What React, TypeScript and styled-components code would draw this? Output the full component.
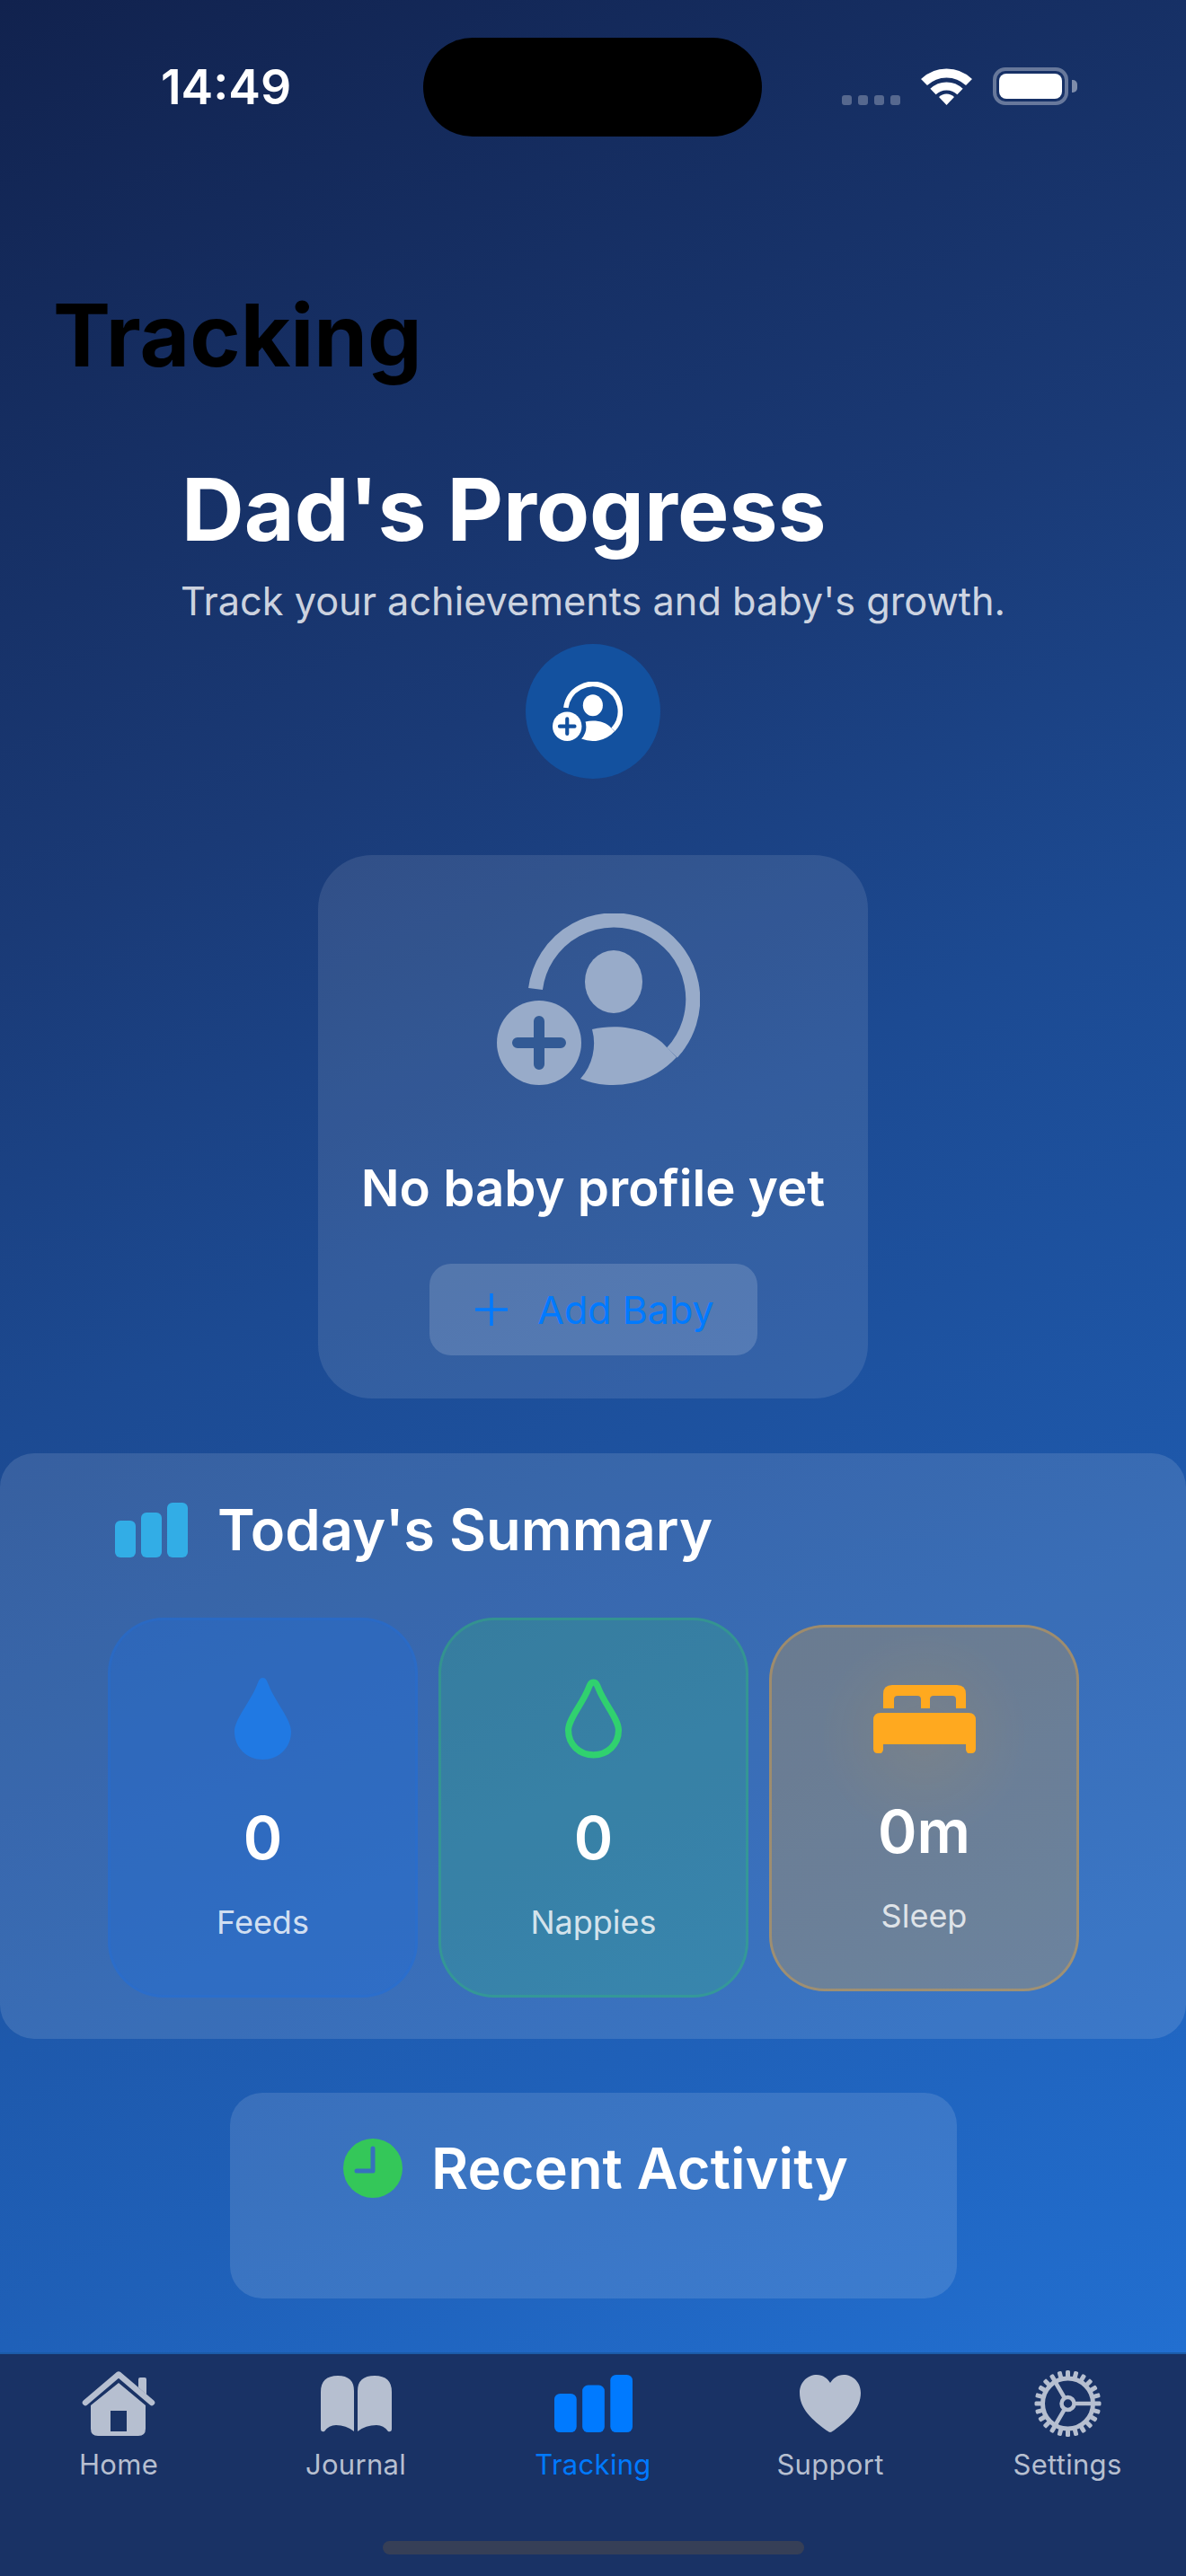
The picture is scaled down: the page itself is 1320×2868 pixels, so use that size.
import * as React from 'react';
import styled, { createGlobalStyle } from 'styled-components';

const GlobalStyle = createGlobalStyle`
  html, body {
    margin: 0;
    padding: 0;
    background: #132650;
  }
  * { box-sizing: border-box; }
`;

const PersonAddIcon = ({ width, color, cut }: { width: number; color: string; cut: string }) => (
  <svg width={width} viewBox="0 0 226 192" fill="none">
    <path d="M43 84A88 88 0 1 1 195 155" stroke={color} strokeWidth="16" />
    <ellipse cx="130" cy="76" rx="32" ry="35" fill={color} />
    <path d="M106 129C135 122 172 128 189 149L200 160A96 96 0 0 1 93 184A59 59 0 0 0 106 129Z" fill={color} />
    <circle cx="47" cy="144" r="47" fill={color} />
    <path d="M47 120V168M23 144H71" stroke={cut} strokeWidth="12" strokeLinecap="round" />
  </svg>
);

const BarsIcon = ({ width, height, color }: { width: number; height: number; color: string }) => (
  <svg width={width} height={height} viewBox="0 0 81 61" preserveAspectRatio="none" fill={color}>
    <rect x="0" y="20" width="23" height="41" rx="6" />
    <rect x="29" y="11" width="23" height="50" rx="6" />
    <rect x="58" y="0" width="23" height="61" rx="6" />
  </svg>
);

const DROP = 'M31.5 0C35 0 36 3 38 8C46 28 63 46 63 60C63 78 49 91 31.5 91C14 91 0 78 0 60C0 46 17 28 25 8C27 3 28 0 31.5 0Z';

const FilledDrop = () => (
  <svg width="63" height="91" viewBox="0 0 63 91">
    <path d={DROP} fill="#2079e3" />
  </svg>
);

const OutlineDrop = () => (
  <svg width="63" height="91" viewBox="-4 -4 71 99">
    <path d={DROP} fill="none" stroke="#30d16f" strokeWidth="8" />
  </svg>
);

const BedIcon = () => (
  <svg width="114" height="76" viewBox="0 0 114 76" fill="#ffa91f">
    <path
      fillRule="evenodd"
      d="M11 26V10Q11 0 21 0H93Q103 0 103 10V26ZM23 26H53V16Q53 12 49 12H27Q23 12 23 16ZM63 26H92V16Q92 12 88 12H67Q63 12 63 16Z"
    />
    <path d="M8 31H106Q114 31 114 39V71Q114 76 109 76H106Q104 76 103 72V66H11V72Q10 76 8 76H5Q0 76 0 71V39Q0 31 8 31Z" />
  </svg>
);

const ClockIcon = () => (
  <svg width="66" height="66" viewBox="0 0 66 66">
    <circle cx="33" cy="33" r="33" fill="#34c759" />
    <path d="M33 11V36H15" fill="none" stroke="#3671bd" strokeWidth="5" strokeLinecap="round" strokeLinejoin="round" />
  </svg>
);

const PlusIcon = () => (
  <svg width="36" height="36" viewBox="0 0 36 36">
    <path d="M18 0V36M0 18H36" stroke="#007aff" strokeWidth="3.5" />
  </svg>
);

const WifiIcon = () => (
  <svg width="57" height="42" viewBox="0 0 57 42" fill="none" stroke="#fff">
    <path d="M3.5 16.5A36 36 0 0 1 53.5 16.5" strokeWidth="10" />
    <path d="M13.5 27A21.5 21.5 0 0 1 43.5 27" strokeWidth="9" />
    <path d="M28.5 42L20 33A12 12 0 0 1 37 33Z" fill="#fff" stroke="none" />
  </svg>
);

const HomeIcon = () => (
  <svg width="82" height="72" viewBox="0 0 82 72" fill="#b6bfd0">
    <path d="M4 35L41 3.5L78 35" fill="none" stroke="#b6bfd0" strokeWidth="6.5" strokeLinecap="round" strokeLinejoin="round" />
    <path d="M63 9Q63 7 65 7H70Q72 7 72 9V26L63 18Z" />
    <path fillRule="evenodd" d="M41 13L71 38V64Q71 72 63 72H18Q10 72 10 64V38ZM32 44H50V67H32Z" />
  </svg>
);

const BookIcon = () => (
  <svg width="79" height="63" viewBox="0 0 79 63" fill="#b6bfd0">
    <path d="M0 18Q0 0 19 0Q37 0 37 17V62Q28 55 17 55Q9 55 4 62Q0 63 0 59Z" />
    <path d="M79 18Q79 0 60 0Q41 0 41 17V62Q50 55 62 55Q70 55 75 62Q79 63 79 59Z" />
  </svg>
);

const HeartIcon = () => (
  <svg width="68" height="64" viewBox="0 0 68 64" fill="#b6bfd0">
    <path d="M34 64C33 64 32 63 30 62C14 50 0 38 0 20C0 8 9 0 19 0C26 0 31 4 34 9C37 4 42 0 49 0C59 0 68 8 68 20C68 38 54 50 38 62C36 63 35 64 34 64Z" />
  </svg>
);

const GearIcon = () => (
  <svg width="75" height="74" viewBox="0 0 75 74" fill="none" stroke="#b6bfd0">
    <g transform="translate(37.5 37)">
      <circle r="28" strokeWidth="5" />
      <circle r="7" strokeWidth="4.5" />
      <path d="M7 0H28M-3.5 -6L-14 -24M-3.5 6L-14 24" strokeWidth="4.5" />
      {Array.from({ length: 24 }).map((_, i) => (
        <rect key={i} x="-2.5" y="-37" width="5" height="8" rx="1.5" fill="#b6bfd0" stroke="none" transform={`rotate(${i * 15})`} />
      ))}
    </g>
  </svg>
);

const tabs = [
  { label: 'Home', icon: <HomeIcon /> },
  { label: 'Journal', icon: <BookIcon /> },
  { label: 'Tracking', icon: <BarsIcon width={87} height={64} color="#007aff" />, active: true },
  { label: 'Support', icon: <HeartIcon /> },
  { label: 'Settings', icon: <GearIcon /> },
];

export default function App() {
  return (
    <Screen>
      <GlobalStyle />
      <Content>
        <StatusBar>
          <Time>14:49</Time>
          <Island />
          <StatusIcons>
            <SignalDots>
              <Dot />
              <Dot />
              <Dot />
              <Dot />
            </SignalDots>
            <WifiIcon />
            <Battery>
              <BatteryLevel />
            </Battery>
          </StatusIcons>
        </StatusBar>

        <PageTitle>Tracking</PageTitle>

        <Hero>
          <HeroTitle>Dad's Progress</HeroTitle>
          <HeroSub>Track your achievements and baby's growth.</HeroSub>
          <HeroBadge>
            <PersonAddIcon width={78} color="#fff" cut="#13519f" />
          </HeroBadge>
        </Hero>

        <EmptyCard>
          <PersonAddIcon width={226} color="#98abc9" cut="#325a95" />
          <EmptyText>No baby profile yet</EmptyText>
          <AddButton>
            <PlusIcon />
            Add Baby
          </AddButton>
        </EmptyCard>

        <SummaryPanel>
          <SummaryHeader>
            <BarsIcon width={81} height={61} color="#32ade6" />
            <SectionTitle>Today's Summary</SectionTitle>
          </SummaryHeader>
          <StatGrid>
            <StatCard $bg="rgba(28, 110, 225, 0.3)" $border="rgba(32, 110, 220, 0.3)">
              <StatIcon $h={91}>
                <FilledDrop />
              </StatIcon>
              <StatValue>0</StatValue>
              <StatLabel>Feeds</StatLabel>
            </StatCard>
            <StatCard $bg="rgba(48, 200, 110, 0.22)" $border="rgba(48, 200, 110, 0.3)">
              <StatIcon $h={91}>
                <OutlineDrop />
              </StatIcon>
              <StatValue>0</StatValue>
              <StatLabel>Nappies</StatLabel>
            </StatCard>
            <SleepCard>
              <StatIcon $h={76}>
                <BedIcon />
              </StatIcon>
              <StatValue>0m</StatValue>
              <StatLabel>Sleep</StatLabel>
            </SleepCard>
          </StatGrid>
        </SummaryPanel>

        <RecentPanel>
          <RecentHeader>
            <ClockIcon />
            <SectionTitle>Recent Activity</SectionTitle>
          </RecentHeader>
        </RecentPanel>
      </Content>

      <TabBar>
        <TabRow>
          {tabs.map(tab => (
            <Tab key={tab.label}>
              <TabIcon>{tab.icon}</TabIcon>
              <TabLabel $active={tab.active}>{tab.label}</TabLabel>
            </Tab>
          ))}
        </TabRow>
        <HomeBar />
      </TabBar>
    </Screen>
  );
}

const Screen = styled.div`
  width: 1320px;
  height: 2868px;
  display: flex;
  flex-direction: column;
  overflow: hidden;
  font-family: Inter, 'Liberation Sans', sans-serif;
  color: #fff;
  background: linear-gradient(155deg, #11224e 0%, #1a3a76 30%, #1c4a92 46%, #1f60b8 75%, #2375da 100%);
`;

const Content = styled.div`
  flex: 1;
  display: flex;
  flex-direction: column;
`;

const StatusBar = styled.div`
  display: grid;
  grid-template-columns: 471px 377px 1fr;
  padding-top: 42px;
  height: 152px;
`;

const Time = styled.div`
  padding-left: 179px;
  font-size: 53.5px;
  font-weight: 600;
  line-height: 110px;
`;

const Island = styled.div`
  height: 110px;
  background: #000;
  border-radius: 55px;
`;

const StatusIcons = styled.div`
  display: flex;
  align-items: flex-end;
  height: 75px;
  padding-left: 89px;
`;

const SignalDots = styled.div`
  display: flex;
  gap: 7px;
  margin-right: 23px;
  height: 11px;
`;

const Dot = styled.span`
  width: 11px;
  height: 11px;
  border-radius: 3px;
  background: rgba(255, 255, 255, 0.28);
`;

const Battery = styled.div`
  position: relative;
  width: 84px;
  height: 42px;
  margin-left: 23px;
  padding: 3px;
  border: 4px solid rgba(255, 255, 255, 0.35);
  border-radius: 14px;

  &::after {
    content: '';
    position: absolute;
    right: -14px;
    top: 10px;
    width: 6px;
    height: 14px;
    border-radius: 0 5px 5px 0;
    background: rgba(255, 255, 255, 0.45);
  }
`;

const BatteryLevel = styled.div`
  height: 100%;
  background: #fff;
  border-radius: 8px;
`;

const PageTitle = styled.h1`
  margin: 166px 0 0 59px;
  font-size: 96px;
  font-weight: 700;
  line-height: 110px;
  color: #000;
`;

const Hero = styled.div`
  align-self: center;
  display: flex;
  flex-direction: column;
  align-items: flex-start;
  margin-top: 81px;
`;

const HeroTitle = styled.h2`
  margin: 0 0 0 1px;
  font-size: 96.5px;
  font-weight: 700;
  line-height: 116px;
`;

const HeroSub = styled.div`
  margin-top: 18px;
  font-size: 43.25px;
  line-height: 52px;
  color: rgba(255, 255, 255, 0.8);
`;

const HeroBadge = styled.div`
  align-self: center;
  width: 150px;
  height: 150px;
  margin-top: 22px;
  padding-right: 12px;
  border-radius: 50%;
  background: #13519f;
  display: flex;
  align-items: center;
  justify-content: center;
`;

const EmptyCard = styled.div`
  align-self: center;
  width: 612px;
  height: 605px;
  margin-top: 85px;
  padding: 65px 0 0 0;
  border-radius: 60px;
  background: rgba(255, 255, 255, 0.1);
  display: flex;
  flex-direction: column;
  align-items: center;

  & > svg {
    margin-left: 12px;
  }
`;

const EmptyText = styled.div`
  margin-top: 80px;
  font-size: 56.4px;
  font-weight: 600;
  line-height: 68px;
`;

const AddButton = styled.div`
  width: 365px;
  height: 102px;
  margin-top: 50px;
  padding-left: 4px;
  border-radius: 24px;
  background: rgba(255, 255, 255, 0.16);
  display: flex;
  align-items: center;
  justify-content: center;
  gap: 33px;
  font-size: 43px;
  color: #007aff;
`;

const SummaryPanel = styled.div`
  height: 652px;
  margin-top: 61px;
  padding: 40px 120px 0;
  border-radius: 38px;
  background: rgba(255, 255, 255, 0.12);
`;

const SummaryHeader = styled.div`
  display: flex;
  align-items: center;
  gap: 33px;
  padding-left: 8px;
  height: 90px;
`;

const SectionTitle = styled.div`
  font-size: 63.2px;
  font-weight: 600;
  line-height: 76px;
`;

const StatGrid = styled.div`
  display: grid;
  grid-template-columns: repeat(3, 345px);
  column-gap: 23px;
  align-items: center;
  margin-top: 53px;
`;

const StatCard = styled.div<{ $bg: string; $border: string }>`
  height: 423px;
  padding-top: 64px;
  border-radius: 62px;
  border: 3px solid ${p => p.$border};
  background: ${p => p.$bg};
  display: flex;
  flex-direction: column;
  align-items: center;
`;

const SleepCard = styled(StatCard).attrs({
  $bg: 'radial-gradient(circle at 50% 30%, rgba(255, 170, 40, 0.32), rgba(255, 170, 40, 0.25) 35%)',
  $border: 'rgba(255, 170, 40, 0.35)',
})`
  height: 408px;
`;

const StatIcon = styled.div<{ $h: number }>`
  height: ${p => p.$h}px;
  display: flex;
`;

const StatValue = styled.div`
  margin-top: 47px;
  font-size: 66px;
  font-weight: 600;
  line-height: 80px;
`;

const StatLabel = styled.div`
  margin-top: 33px;
  font-size: 36px;
  line-height: 42px;
  color: rgba(255, 255, 255, 0.8);
`;

const RecentPanel = styled.div`
  align-self: center;
  width: 809px;
  height: 229px;
  margin-top: 60px;
  padding: 46px 0 0 6px;
  border-radius: 36px;
  background: rgba(255, 255, 255, 0.12);
`;

const RecentHeader = styled.div`
  display: flex;
  align-items: center;
  justify-content: center;
  gap: 32px;
`;

const TabBar = styled.div`
  height: 249px;
  background: #193265;
  border-top: 2px solid #1b5ba8;
  display: flex;
  flex-direction: column;
  align-items: center;
`;

const TabRow = styled.div`
  width: 100%;
  display: grid;
  grid-template-columns: repeat(5, 264px);
`;

const Tab = styled.div`
  display: flex;
  flex-direction: column;
  align-items: center;
`;

const TabIcon = styled.div`
  height: 76px;
  margin-top: 17px;
  display: flex;
  align-items: center;
`;

const TabLabel = styled.div<{ $active?: boolean }>`
  margin-top: 12px;
  font-size: 31px;
  letter-spacing: 0.3px;
  line-height: 36px;
  color: ${p => (p.$active ? '#007aff' : '#b6bfd0')};
`;

const HomeBar = styled.div`
  width: 469px;
  height: 15px;
  margin-top: auto;
  margin-bottom: 24px;
  border-radius: 8px;
  background: #363f57;
`;
